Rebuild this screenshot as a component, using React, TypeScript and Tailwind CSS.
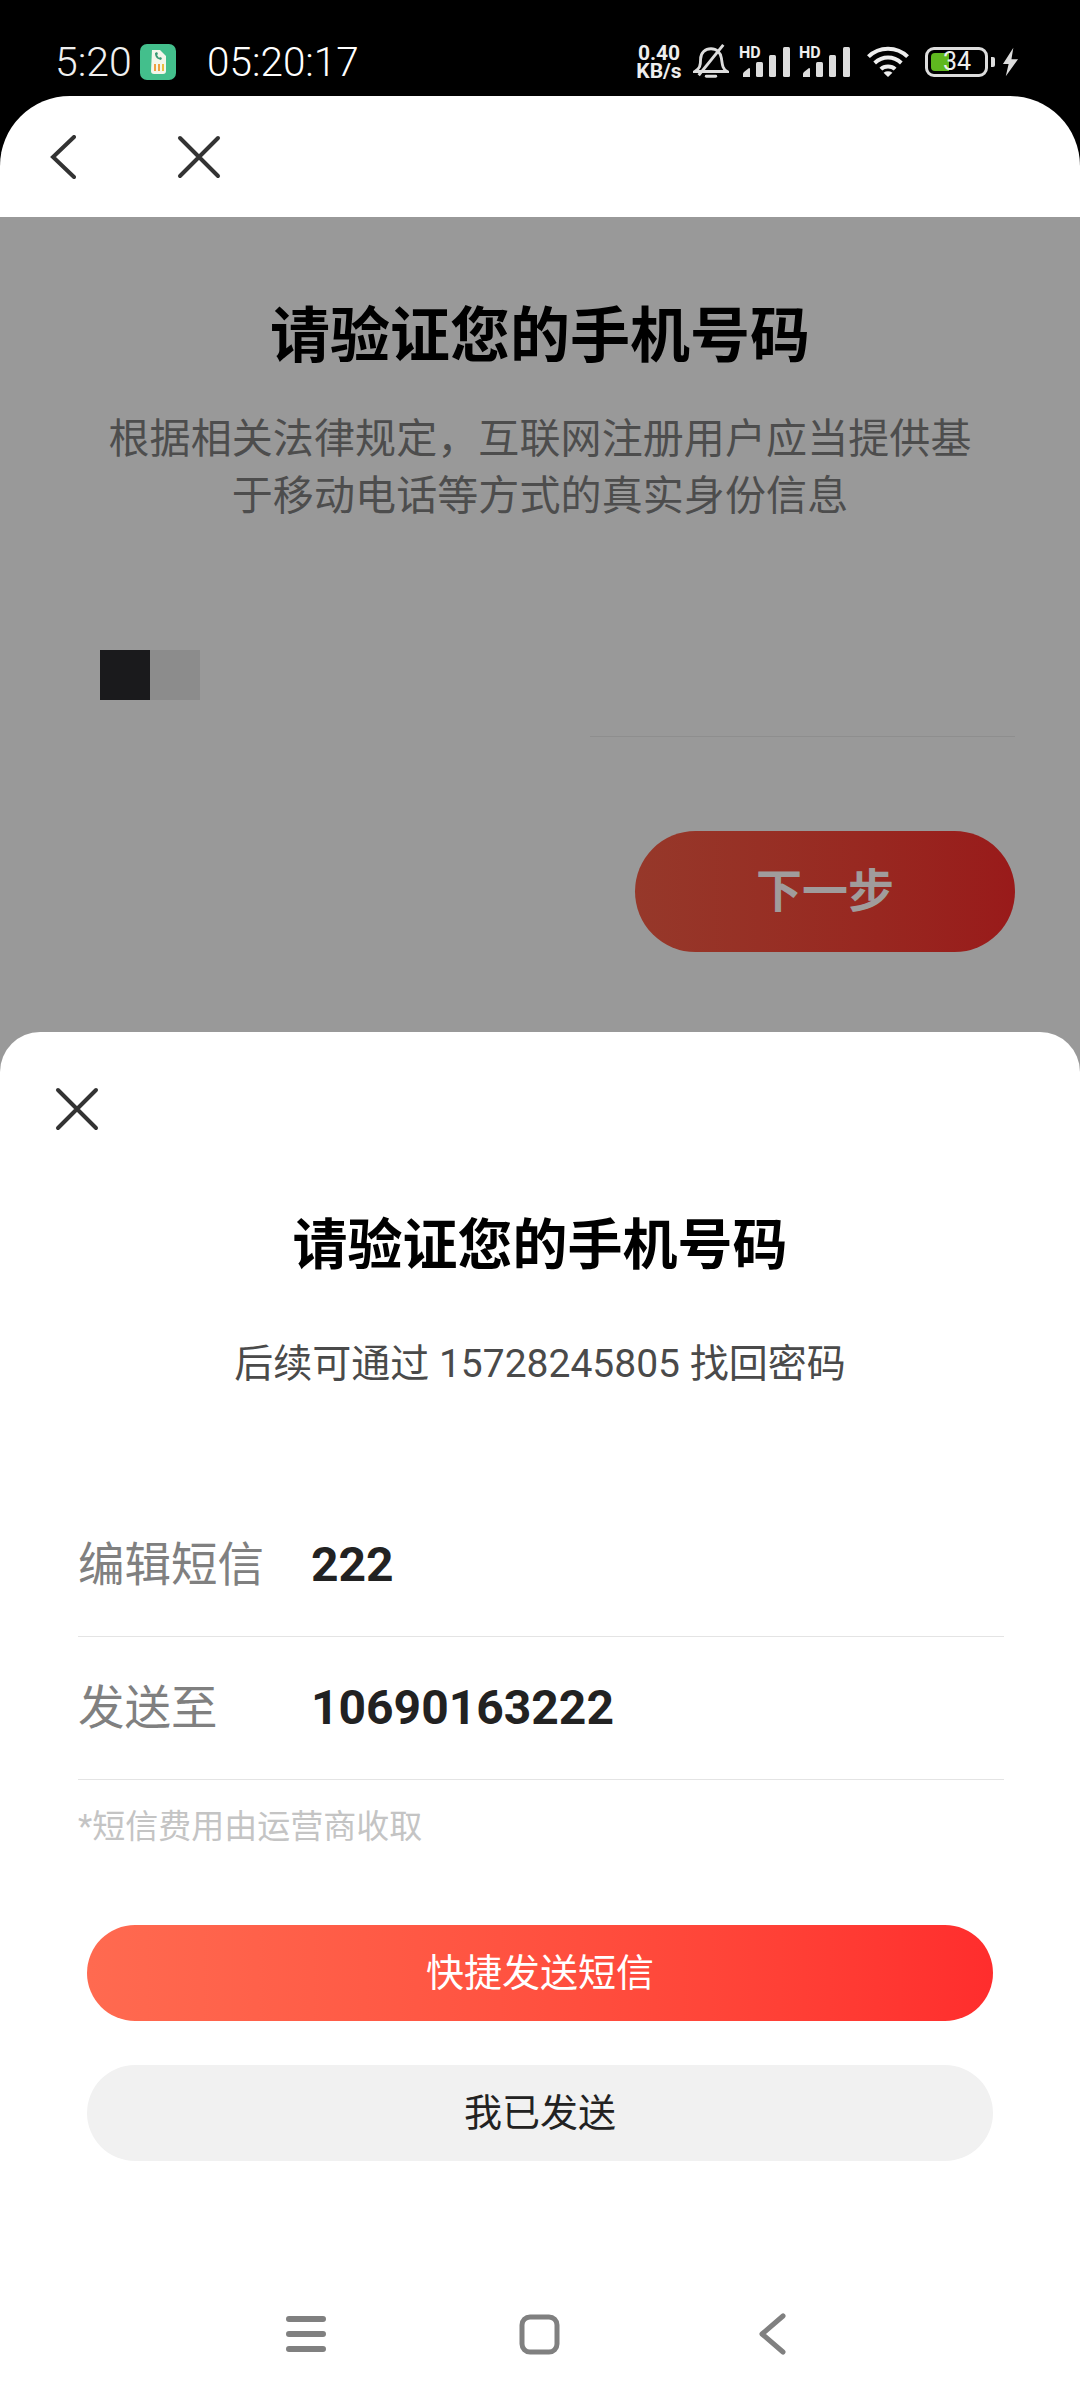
const FONT = "font-['Roboto','Noto_Sans_CJK_SC',sans-serif]"

const CloseIcon = ({ size }: { size: number }) => (
  <svg width={size} height={size} viewBox="0 0 44 44" fill="none" stroke="#333" strokeWidth="4" strokeLinecap="round">
    <path d="M3 3 L41 41 M41 3 L3 41" />
  </svg>
)

const SignalIcon = () => (
  <svg width="52" height="32" viewBox="0 0 52 32" className="block overflow-visible">
    <text x="-1" y="12" fontSize="16" fontWeight="700" fill="#eee" fontFamily="Roboto">HD</text>
    <path d="M3 31 v-3 q0-1 1-2 l5-4 q1 0 1 1 v8 z" fill="#ddd" />
    <rect x="16" y="16" width="7" height="15" rx="1.5" fill="#ddd" />
    <rect x="29" y="9" width="7" height="22" rx="1.5" fill="#ddd" />
    <rect x="43" y="1" width="7" height="30" rx="1.5" fill="#ddd" />
  </svg>
)

const StatusBar = () => (
  <div className="flex h-[96px] shrink-0 items-center bg-black pt-[28px] text-white">
    <span className="ml-[55px] w-[72px] text-[41px] font-light leading-none text-[#f0f0f0]">5:20</span>
    <div className="ml-[13px] flex h-[36px] w-[36px] items-center justify-center rounded-[7px] bg-[#43bf8c]">
      <svg width="24" height="28" viewBox="0 0 24 28">
        <path d="M6 2h8l6 6 v15 a3 3 0 0 1-3 3H8 a3 3 0 0 1-3-3 z" fill="#f4f6ea" />
        <path d="M9 5c0 4 2 6 6 7l1-2-2-1-1 1-2-3 1-1-1-2z" fill="#3a9a74" />
        <rect x="8" y="16" width="2" height="7" fill="#f0a040" />
        <rect x="12" y="16" width="2" height="7" fill="#f0a040" />
        <rect x="16" y="16" width="2" height="7" fill="#e8c040" />
      </svg>
    </div>
    <span className="ml-[31px] text-[40.5px] font-light leading-none">05:20:17</span>
    <div className="ml-auto mr-[61px] flex items-center">
      <div className="flex w-[50px] flex-col items-center text-[21px] font-bold leading-[18px] text-[#eee]">
        <span>0.40</span>
        <span>KB/s</span>
      </div>
      <svg width="36" height="38" viewBox="0 0 38 40" fill="none" stroke="#ddd" strokeWidth="3" className="ml-[9px]">
        <path d="M2 30 c5-3 6-6 6-13 c0-7 5-11 11-11 c6 0 10 4 11 10 c1 7 1 11 6 14 z" />
        <path d="M14 35 h10" strokeLinecap="round" />
        <path d="M32 2 L6 34" />
      </svg>
      <div className="ml-[11px]"><SignalIcon /></div>
      <div className="ml-[8px]"><SignalIcon /></div>
      <svg width="46" height="32" viewBox="0 0 48 36" fill="none" stroke="#eee" strokeWidth="4.5" className="ml-[13px]">
        <path d="M2 12 C14 0 34 0 46 12" />
        <path d="M9 19 C18 11 30 11 39 19" />
        <path d="M16 26 C20 22 28 22 32 26" />
        <path d="M24 35 l-5-5 q5-3 10 0 z" fill="#eee" stroke="none" />
      </svg>
      <div className="relative ml-[14px] flex h-[30px] w-[63px] items-center rounded-[9px] border-[3px] border-[#ddd] p-[3px]">
        <div className="h-full w-[18px] rounded-l-[4px] bg-[#5fb81f]" />
        <span className="absolute left-[15px] top-[-3px] text-[25px] leading-[30px] text-[#eee]">34</span>
      </div>
      <div className="ml-[3px] h-[10px] w-[4px] rounded-r-[2px] bg-[#ddd]" />
      <svg width="17" height="30" viewBox="0 0 18 30" className="ml-[7px]">
        <path d="M12 0 L1 17 h6 L4 30 L17 12 h-7 z" fill="#ddd" />
      </svg>
    </div>
  </div>
)

const Header = () => (
  <div className="flex h-[121px] shrink-0 items-center rounded-t-[70px] bg-white">
    <svg width="26" height="44" viewBox="0 0 26 44" fill="none" stroke="#333" strokeWidth="4" strokeLinecap="round" className="ml-[50px]">
      <path d="M24 2 L3 22 L24 42" />
    </svg>
    <div className="ml-[101px]"><CloseIcon size={44} /></div>
  </div>
)

const BackgroundPage = () => (
  <div className="flex h-[815px] shrink-0 flex-col bg-[#999999]">
    <h1 className="mt-[85px] text-center text-[60px] font-bold leading-[70px] text-black">请验证您的手机号码</h1>
    <p className="mt-[39px] text-center text-[41px] leading-[57px] tracking-[0.1px] text-[#4d4d4d]">
      根据相关法律规定，互联网注册用户应当提供基
      <br />
      于移动电话等方式的真实身份信息
    </p>
    <div className="ml-[100px] mt-[125px] flex h-[50px]">
      <div className="w-[50px] bg-[#1a1a1c]" />
      <div className="w-[50px] bg-[#8c8c8c]" />
    </div>
    <div className="ml-[590px] mt-[36px] h-px w-[425px] bg-[#8e8e8e]" />
    <div className="ml-[635px] mt-[94px] flex h-[121px] w-[380px] items-center justify-center rounded-full bg-gradient-to-r from-[#96382a] to-[#991a1a] text-[46px] font-bold text-[#a09c9c]">
      下一步
    </div>
  </div>
)

const InfoRow = ({ label, value }: { label: string; value: string }) => (
  <div className="flex h-[143px] items-center border-b border-[#e4e4e4]">
    <span className="w-[233px] text-[46.5px] leading-none text-[#808080]">{label}</span>
    <span className="text-[48px] font-bold leading-none text-[#222]">{value}</span>
  </div>
)

const VerifySheet = () => (
  <div className="flex min-h-0 flex-1 flex-col rounded-t-[40px] bg-white">
    <div className="ml-[55px] mt-[55px]"><CloseIcon size={44} /></div>
    <h2 className="mt-[82px] text-center text-[55px] font-bold leading-[64px] text-black">请验证您的手机号码</h2>
    <p className="mt-[64px] text-center text-[39px] leading-[46px] text-[#4a4a4a]">后续可通过 15728245805 找回密码</p>
    <div className="ml-[78px] mr-[76px] mt-[107px]">
      <InfoRow label="编辑短信" value="222" />
      <InfoRow label="发送至" value="10690163222" />
      <div className="mt-[27px] text-[33px] leading-[40px] text-[#c4c4c4]">*短信费用由运营商收取</div>
    </div>
    <div className="mx-[87px] mt-[78px] flex flex-col gap-[44px]">
      <button className="h-[96px] rounded-full bg-gradient-to-r from-[#ff6a50] to-[#ff2d2d] text-[38px] text-white">快捷发送短信</button>
      <button className="h-[96px] rounded-full bg-[#f1f1f1] text-[38px] text-[#222]">我已发送</button>
    </div>
    <div className="ml-[286px] mt-[152px] flex items-center gap-[193px]">
      <svg width="40" height="38" viewBox="0 0 40 38" fill="none" stroke="#808080" strokeWidth="6" strokeLinecap="round">
        <path d="M3 4 H37 M3 19 H37 M3 34 H37" />
      </svg>
      <svg width="41" height="41" viewBox="0 0 41 41" fill="none" stroke="#808080" strokeWidth="5">
        <rect x="3" y="3" width="35" height="35" rx="8" />
      </svg>
      <svg width="28" height="42" viewBox="0 0 28 42" fill="none" stroke="#808080" strokeWidth="5" strokeLinecap="round" strokeLinejoin="round" className="ml-[5px]">
        <path d="M25 3 L4 21 L25 39" />
      </svg>
    </div>
  </div>
)

export default function App() {
  return (
    <div className={`flex h-[2400px] w-[1080px] flex-col overflow-hidden bg-[#999999] ${FONT}`}>
      <div className="bg-black">
        <StatusBar />
        <Header />
      </div>
      <BackgroundPage />
      <VerifySheet />
    </div>
  )
}
